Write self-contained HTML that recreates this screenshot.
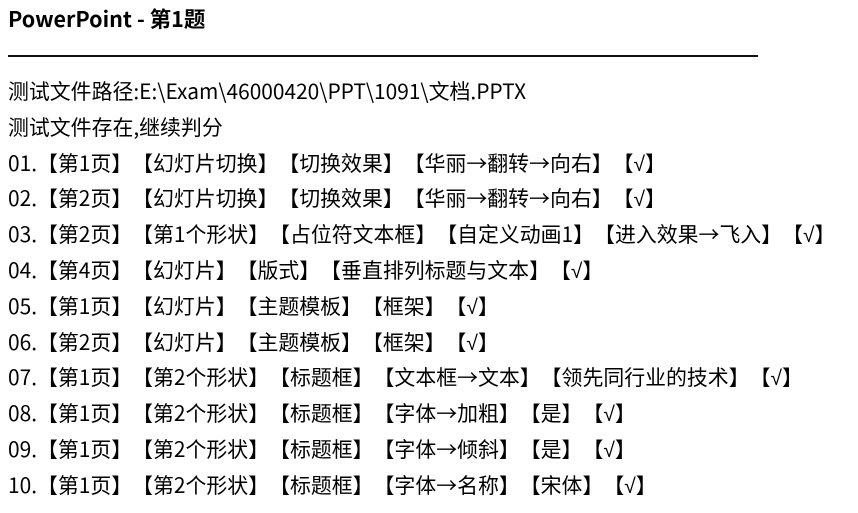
<!DOCTYPE html>
<html><head><meta charset="utf-8"><style>
body{margin:0;width:858px;height:513px;background:#fff;overflow:hidden;font-family:"Noto Sans CJK SC","Liberation Sans",sans-serif;color:#000;text-spacing-trim:space-all}
.t{position:absolute;left:8px;top:5px;font-size:21.5px;font-weight:bold;line-height:28px;white-space:nowrap}
.hr{position:absolute;left:8px;top:55px;width:750px;height:2px;background:#111}
.l{position:absolute;left:8px;font-size:20.9px;line-height:28px;white-space:nowrap;text-spacing-trim:space-all}
i{font-style:normal;font-family:"Liberation Sans",sans-serif}
</style></head><body>
<div class="t">PowerPoint - 第1题</div>
<div class="hr"></div>
<div class="l" style="top:77px">测试文件路径:E:\Exam\46000420\PPT\1091\文档.PPTX</div>
<div class="l" style="top:113px">测试文件存在,继续判分</div>
<div class="l" style="top:149px">01.【第1页】【幻灯片切换】【切换效果】【华丽→翻转→向右】【<i>√</i>】</div>
<div class="l" style="top:184px">02.【第2页】【幻灯片切换】【切换效果】【华丽→翻转→向右】【<i>√</i>】</div>
<div class="l" style="top:220px">03.【第2页】【第1个形状】【占位符文本框】【自定义动画1】【进入效果→飞入】【<i>√</i>】</div>
<div class="l" style="top:256px">04.【第4页】【幻灯片】【版式】【垂直排列标题与文本】【<i>√</i>】</div>
<div class="l" style="top:292px">05.【第1页】【幻灯片】【主题模板】【框架】【<i>√</i>】</div>
<div class="l" style="top:328px">06.【第2页】【幻灯片】【主题模板】【框架】【<i>√</i>】</div>
<div class="l" style="top:363px">07.【第1页】【第2个形状】【标题框】【文本框→文本】【领先同行业的技术】【<i>√</i>】</div>
<div class="l" style="top:399px">08.【第1页】【第2个形状】【标题框】【字体→加粗】【是】【<i>√</i>】</div>
<div class="l" style="top:435px">09.【第1页】【第2个形状】【标题框】【字体→倾斜】【是】【<i>√</i>】</div>
<div class="l" style="top:471px">10.【第1页】【第2个形状】【标题框】【字体→名称】【宋体】【<i>√</i>】</div>
</body></html>
